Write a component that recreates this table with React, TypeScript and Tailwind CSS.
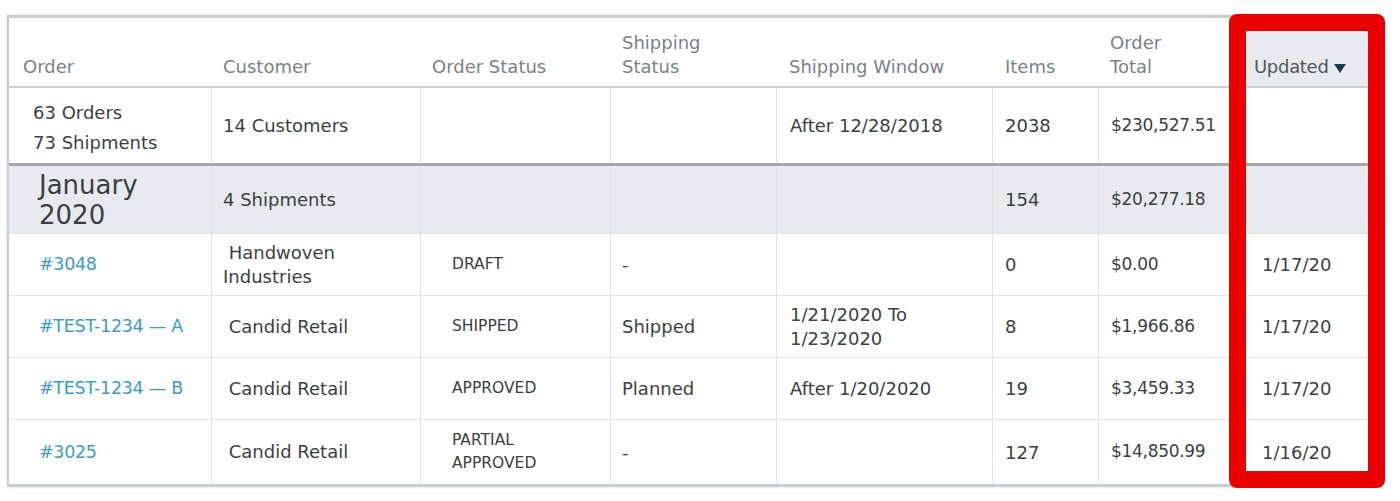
import React from 'react';

const cols = 'grid grid-cols-[203px_209px_190px_166px_216px_106px_146px_1fr]';
const cell = 'flex items-center border-r border-[#dfe4ea] px-[11px]';

type Row = {
  order: string;
  customer: string[];
  status: string[];
  ship: string;
  window: string[];
  items: string;
  total: string;
  updated: string;
};

const rows: Row[] = [
  { order: '#3048', customer: ['\u00a0Handwoven', 'Industries'], status: ['DRAFT'], ship: '-', window: [], items: '0', total: '$0.00', updated: '1/17/20' },
  { order: '#TEST-1234 — A', customer: ['\u00a0Candid Retail'], status: ['SHIPPED'], ship: 'Shipped', window: ['1/21/2020 To', '1/23/2020'], items: '8', total: '$1,966.86', updated: '1/17/20' },
  { order: '#TEST-1234 — B', customer: ['\u00a0Candid Retail'], status: ['APPROVED'], ship: 'Planned', window: ['After 1/20/2020'], items: '19', total: '$3,459.33', updated: '1/17/20' },
  { order: '#3025', customer: ['\u00a0Candid Retail'], status: ['PARTIAL', 'APPROVED'], ship: '-', window: [], items: '127', total: '$14,850.99', updated: '1/16/20' },
];

function Header() {
  const h = 'flex flex-col justify-end px-[14px] pb-[7px]';
  return (
    <div className={`${cols} h-[70px] border-b-2 border-[#c9ced3] text-[18px] leading-[24px] text-[#7b8186]`}>
      <div className={h}>Order</div>
      <div className={`${h} pl-[11px]`}>Customer</div>
      <div className={`${h} pl-[11px]`}>Order Status</div>
      <div className={`${h} pl-[11px]`}>
        <span>Shipping</span>
        <span>Status</span>
      </div>
      <div className={`${h} pl-[12px]`}>Shipping Window</div>
      <div className={`${h} pl-[12px]`}>Items</div>
      <div className={`${h} pl-[11px]`}>
        <span>Order</span>
        <span>Total</span>
      </div>
      <div className={`${h} bg-[#e7ebef] pl-[9px] text-[#51575c]`}>
        <span className="flex items-center gap-[5px] tracking-[-0.3px]">
          Updated
          <svg width="12" height="9" viewBox="0 0 12 9" className="mt-[3px]">
            <path d="M0 0h12L6 9z" fill="#1f3a4a" />
          </svg>
        </span>
      </div>
    </div>
  );
}

export default function App() {
  return (
    <div className="relative h-[501px] w-[1400px] bg-white pl-[7px] pt-[15px] font-['DejaVu_Sans',sans-serif] text-[#3b3f43]">
      <div className="w-[1372px] border-x-2 border-t-[3px] border-b-[3px] border-[#c9ced3] shadow-[0_0_3px_rgba(0,0,0,0.15)]">
        <Header />

        <div className={`${cols} h-[78px] border-b-[3px] border-[#a2a8ad] text-[18px]`}>
          <div className={`${cell} flex-col items-start justify-center pl-[24px] pt-[5px] leading-[30px]`}>
            <span>63 Orders</span>
            <span>73 Shipments</span>
          </div>
          <div className={cell}>14 Customers</div>
          <div className={cell} />
          <div className={cell} />
          <div className={`${cell} pl-[13px]`}>After 12/28/2018</div>
          <div className={`${cell} pl-[12px]`}>2038</div>
          <div className={`${cell} pl-[12px] text-[17px] tracking-[-0.3px]`}>$230,527.51</div>
          <div className={cell} />
        </div>

        <div className={`${cols} h-[68px] border-b border-[#dfe4ea] bg-[#e7ebf0] text-[18px]`}>
          <div className={`${cell} flex-col items-start justify-center pl-[30px] text-[26px] leading-[30px]`}>
            <span>January</span>
            <span>2020</span>
          </div>
          <div className={cell}>4 Shipments</div>
          <div className={cell} />
          <div className={cell} />
          <div className={cell} />
          <div className={`${cell} pl-[12px]`}>154</div>
          <div className={`${cell} pl-[12px] text-[17px] tracking-[-0.3px]`}>$20,277.18</div>
          <div className={cell} />
        </div>

        {rows.map((r, i) => (
          <div
            key={r.order}
            className={`${cols} h-[62px] text-[18px] ${i < rows.length - 1 ? 'border-b border-[#dfe4ea]' : 'h-[64px]'}`}
          >
            <div className={`${cell} pl-[30px] text-[17.5px] tracking-[-0.3px] text-[#3a9cc4]`}>{r.order}</div>
            <div className={`${cell} flex-col items-start justify-center leading-[24px]`}>
              {r.customer.map((c) => (
                <span key={c}>{c}</span>
              ))}
            </div>
            <div className={`${cell} flex-col items-start justify-center pl-[31px] text-[15.5px] leading-[23px]`}>
              {r.status.map((s) => (
                <span key={s}>{s}</span>
              ))}
            </div>
            <div className={cell}>{r.ship}</div>
            <div className={`${cell} flex-col items-start justify-center pl-[13px] leading-[24px]`}>
              {r.window.map((w) => (
                <span key={w}>{w}</span>
              ))}
            </div>
            <div className={`${cell} pl-[12px]`}>{r.items}</div>
            <div className={`${cell} pl-[12px] text-[17px] tracking-[-0.3px]`}>{r.total}</div>
            <div className={`${cell} border-r-0 pl-[17px]`}>{r.updated}</div>
          </div>
        ))}
      </div>

      <div className="pointer-events-none absolute left-[1229px] top-[14px] h-[474px] w-[156px] rounded-[8px] border-[17px] border-[#e80000]" />
    </div>
  );
}
